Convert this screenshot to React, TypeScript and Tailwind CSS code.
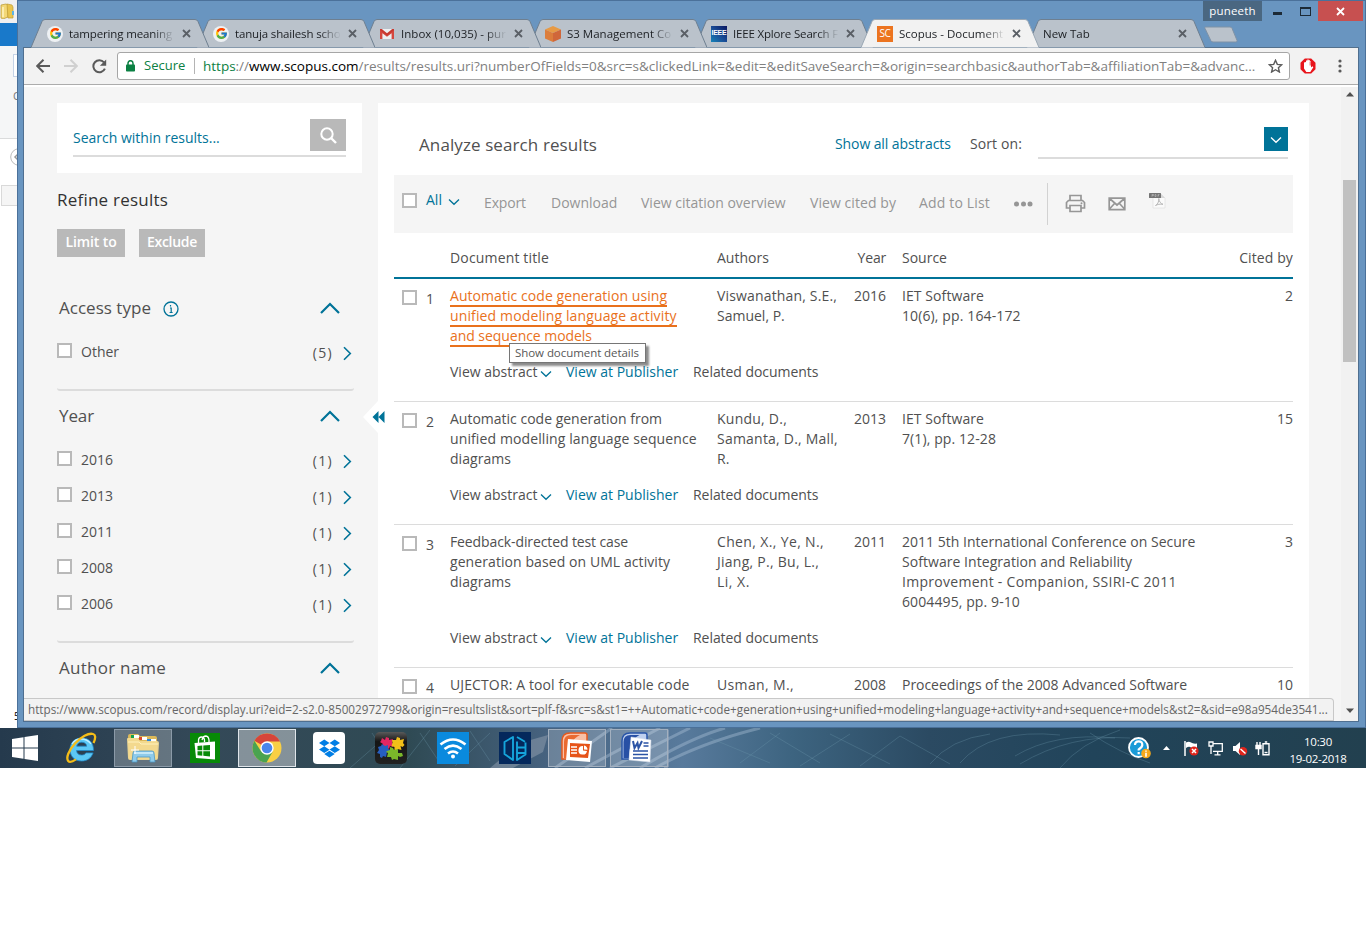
import type { ReactNode } from 'react';
import { FcGoogle } from 'react-icons/fc';
import { FaDropbox } from 'react-icons/fa';

/* ---------- browser tabs ---------- */

function TabShape({ active }: { active?: boolean }) {
  return (
    <svg className="absolute inset-0" width="178" height="29" viewBox="0 0 178 29">
      <path d="M0 28.5 L11 2.5 Q12 .5 14 .5 H164 Q166 .5 167 2.5 L178 28.5 Z" fill={active ? '#f2f2f2' : '#bac2cb'} />
      <path d="M0 28.5 L11 2.5 Q12 .5 14 .5 H164 Q166 .5 167 2.5 L178 28.5" fill="none" stroke={active ? '#9aa7b4' : '#6e7f90'} strokeWidth="1" />
    </svg>
  );
}

const GoogleIcon = () => (
  <span className="flex size-4 items-center justify-center rounded-full bg-[#eef1f4]"><FcGoogle size={13} /></span>
);
const GmailIcon = () => (
  <svg width="16" height="16" viewBox="0 0 16 16">
    <path d="M2 3h12v10H2z" fill="#eceff1" />
    <path d="M1 13V3.400L8 9l7-5.600V13h-2.400V7.200L8 10.800 3.400 7.200V13z" fill="#d5483f" />
    <path d="M1 4.300V3h1.800L8 7.200 13.200 3H15v1.300L8 9.700z" fill="#c8382f" />
  </svg>
);
const CubeIcon = () => (
  <svg width="16" height="16" viewBox="0 0 16 16">
    <path d="M8 0l8 3.500-8 3.500-8-3.500z" fill="#e79a45" />
    <path d="M0 3.500L8 7v9l-8-3.500z" fill="#dc7d3c" />
    <path d="M16 3.500L8 7v9l8-3.500z" fill="#d0673a" />
  </svg>
);
const IeeeIcon = () => (
  <span className="flex size-4 items-center justify-center bg-linear-to-tr from-[#1683b8] via-[#1a4a94] to-[#0b1560] font-['Liberation_Sans'] text-[7px] font-bold tracking-[-0.3px] text-white">IEEE</span>
);
const ScIcon = () => (
  <span className="flex size-4 items-center justify-center bg-[#ec7420] text-[10px] tracking-[-0.3px] text-white">SC</span>
);

const Cross = ({ c = '#5a5f66' }: { c?: string }) => (
  <svg width="9" height="9" viewBox="0 0 9 9"><path d="M1 1l7 7M8 1l-7 7" stroke={c} strokeWidth="1.800" /></svg>
);

type TabData = { icon?: ReactNode; text: string; track: string; active?: boolean };
const tabs: TabData[] = [
  { icon: <GoogleIcon />, text: 'tampering meaning', track: 'tracking-[-0.13px]' },
  { icon: <GoogleIcon />, text: 'tanuja shailesh scho', track: 'tracking-[-0.15px]' },
  { icon: <GmailIcon />, text: 'Inbox (10,035) - pur', track: 'tracking-[0.03px]' },
  { icon: <CubeIcon />, text: 'S3 Management Co', track: 'tracking-[0px]' },
  { icon: <IeeeIcon />, text: 'IEEE Xplore Search F', track: 'tracking-[-0.17px]' },
  { icon: <ScIcon />, text: 'Scopus - Document', track: 'tracking-[0px]', active: true },
  { text: 'New Tab', track: 'tracking-[0px]' },
];
const order = ['z-[7]', 'z-[6]', 'z-[5]', 'z-[4]', 'z-[3]', 'z-[9]', 'z-[1]'];

function TabStrip() {
  return (
    <div className="flex h-[47px] pt-[19px] pl-[13px]">
      {tabs.map((t, i) => (
        <div key={t.text} className={`relative -mr-3 h-[29px] w-[178px] shrink-0 ${order[i]}`}>
          <TabShape active={t.active} />
          <div className="relative flex h-[29px] items-center pl-4">
            {t.icon}
            <span className={`${t.icon ? 'ml-[6px] w-[108px]' : 'w-[130px]'} overflow-hidden text-[11.5px] leading-4 whitespace-nowrap text-[#1c1f23] [mask-image:linear-gradient(to_right,#000_78%,transparent_98%)] ${t.track}`}>{t.text}</span>
            <span className="ml-[5px]"><Cross /></span>
          </div>
        </div>
      ))}
      <svg className="mt-[7px] ml-[10px]" width="36" height="17" viewBox="0 0 36 17">
        <path d="M2.500 1h24.500q1.500 0 2 1.300l5 12q.5 1.700-1 1.700H10q-1.600 0-2.200-1.400L2 2.400Q1.500 1 2.500 1z" fill="#bac2cb" stroke="#7f92a6" />
      </svg>
    </div>
  );
}

function WindowControls() {
  return (
    <div className="absolute top-0 right-[2px] z-20 flex h-5 items-center">
      <span className="flex h-5 w-[59px] items-center justify-center bg-[#4a6781] text-[11.5px] tracking-[0.2px] text-white">puneeth</span>
      <span className="mt-[5px] ml-[11px] h-[3px] w-[9px] bg-[#1c2a36]" />
      <span className="ml-[18px] h-[9px] w-[11px] border border-t-2 border-[#1c2a36]" />
      <span className="ml-[7px] flex h-5 w-[45px] items-center justify-center bg-[#c75050]"><Cross c="#fff" /></span>
    </div>
  );
}

function Toolbar() {
  return (
    <div className="flex h-[38px] items-center border-t border-[#53708c] border-b border-b-[#acacac] bg-[#f2f2f2]">
      <svg className="ml-3 shrink-0" width="14" height="14" viewBox="0 0 14 14"><path d="M14 7H1.500M7.500.7L1.200 7l6.300 6.300" fill="none" stroke="#5a5a5a" strokeWidth="2" /></svg>
      <svg className="ml-[14px] shrink-0" width="14" height="14" viewBox="0 0 14 14"><path d="M0 7h12.500M6.500.7L12.800 7l-6.300 6.300" fill="none" stroke="#d0d0d0" strokeWidth="2" /></svg>
      <svg className="ml-[14px] shrink-0" width="15" height="15" viewBox="0 0 15 15">
        <path d="M12.900 9.600A6 6 0 1 1 12 3.400" fill="none" stroke="#5a5a5a" strokeWidth="2" />
        <path d="M14.200.5v6.300H7.900z" fill="#5a5a5a" />
      </svg>
      <div className="ml-[10px] flex h-7 w-[1173px] shrink-0 items-center rounded-[3px] border border-[#a6a6a6] bg-white whitespace-nowrap">
        <svg className="ml-[8px] shrink-0" width="9" height="12" viewBox="0 0 9 12">
          <path d="M2 5V3.200a2.500 2.500 0 0 1 5 0V5" fill="none" stroke="#0b8043" strokeWidth="1.500" /><rect y="4.500" width="9" height="7" rx=".8" fill="#0b8043" />
        </svg>
        <span className="ml-[9px] w-[42px] text-[13px] text-[#0b8043]">Secure</span>
        <span className="ml-[8px] h-4 w-px bg-[#b4b4b4]" />
        <span className="ml-[8px] w-[1056px] text-[13.5px] tracking-[-0.006px] text-[#808080]"><span className="text-[#0b8043]">https</span>://<span className="text-black">www.scopus.com</span>/results/results.uri?numberOfFields=0&amp;src=s&amp;clickedLink=&amp;edit=&amp;editSaveSearch=&amp;origin=searchbasic&amp;authorTab=&amp;affiliationTab=&amp;advanc...</span>
        <svg className="ml-[9px] shrink-0" width="15" height="14" viewBox="0 0 15 14"><path d="M7.500 1.300l1.800 4.100 4.400.4-3.300 2.900 1 4.300-3.900-2.300L3.600 13l1-4.300L1.300 5.800l4.400-.4z" fill="none" stroke="#5a5a5a" strokeWidth="1.400" /></svg>
      </div>
      <svg className="ml-[10px] shrink-0" width="16" height="16" viewBox="0 0 16 16">
        <path d="M4.800.5h6.400l4.300 4.300v6.400l-4.300 4.300H4.800L.5 11.200V4.800z" fill="#e8141b" />
        <path d="M4 4.500v6L6.300 14h4l3-4.800-.9-.9-1.400 1.200V3.300h-1V2.200H8.600v-.7H7.400V2.600H6V4z" fill="#fff" />
        <path d="M10.200 3.500v4" stroke="#e8141b" strokeWidth=".8" />
      </svg>
      <svg className="ml-[22px] shrink-0" width="4" height="14" viewBox="0 0 4 14"><g fill="#5a5a5a"><circle cx="2" cy="2" r="1.600" /><circle cx="2" cy="7" r="1.600" /><circle cx="2" cy="12" r="1.600" /></g></svg>
    </div>
  );
}

/* ---------- page pieces ---------- */

const Box = ({ className = '' }: { className?: string }) => (
  <span className={`block size-[15px] shrink-0 border-2 border-[#b9b9b9] bg-white ${className}`} />
);
const ChevronUp = () => (
  <svg width="20" height="12" viewBox="0 0 20 12"><path d="M1 11l9-9 9 9" fill="none" stroke="#007398" strokeWidth="2.200" /></svg>
);
const ChevronRight = () => (
  <svg width="9" height="15" viewBox="0 0 9 15"><path d="M1 1.200l6.300 6.300L1 13.800" fill="none" stroke="#007398" strokeWidth="1.600" /></svg>
);
const ChevronDown = ({ c = '#007398' }: { c?: string }) => (
  <svg width="12" height="8" viewBox="0 0 12 8"><path d="M1 1.500l5 4.800 5-4.800" fill="none" stroke={c} strokeWidth="1.300" /></svg>
);

function Facet({ title, track, info, items = [] }: { title: string; track: string; info?: boolean; items?: [string, string][] }) {
  return (
    <section className="w-[297px] rounded-[3px] border-b-2 border-[#dcdcdc] pb-[19px]">
      <div className="mb-px flex h-[50px] items-center pr-[14px] pl-[2px]">
        <h3 className={`text-[17px] whitespace-nowrap ${track}`}>{title}</h3>
        {info && (
          <svg className="mt-[2px] ml-3" width="16" height="16" viewBox="0 0 16 16">
            <circle cx="8" cy="8" r="7" fill="none" stroke="#007398" strokeWidth="1.300" />
            <path d="M7 7h1.200v4.500M6.600 11.500h3M7.500 4v1.500" fill="none" stroke="#007398" strokeWidth="1.200" />
          </svg>
        )}
        <span className="ml-auto"><ChevronUp /></span>
      </div>
      {items.map(([label, count]) => (
        <div key={label} className="flex h-9 items-center pr-[2px]">
          <Box className="mb-[3px]" />
          <span className="mb-[2px] ml-[9px]">{label}</span>
          <span className="mt-[1px] ml-auto tracking-[1.3px]">{count}</span>
          <span className="mt-[3px] ml-[10px]"><ChevronRight /></span>
        </div>
      ))}
    </section>
  );
}

function Sidebar() {
  return (
    <aside className="relative w-[354px] shrink-0 pt-[17px] pl-[33px]">
      <div className="h-[70px] w-[305px] bg-white px-4 pt-4">
        <div className="flex h-[38px] justify-between border-b-2 border-[#dcdcdc]">
          <span className="pt-[8px] text-[#007398]">Search within results...</span>
          <span className="flex h-8 w-9 items-center justify-center bg-[#b9b9b9]">
            <svg width="17" height="17" viewBox="0 0 17 17"><circle cx="7" cy="7" r="5.700" fill="none" stroke="#fff" strokeWidth="2" /><path d="M11 11l5 5" stroke="#fff" strokeWidth="2.400" /></svg>
          </span>
        </div>
      </div>
      <h2 className="mt-[14px] h-[42px] text-[17px] leading-[25px] tracking-[0.22px] text-[#323232]">Refine results</h2>
      <div className="flex gap-[14px] font-semibold text-white">
        <span className="flex h-7 w-[68px] justify-center bg-[#b9b9b9] pt-[2px] tracking-[-0.1px]">Limit to</span>
        <span className="flex h-7 w-[66px] justify-center bg-[#b9b9b9] pt-[2px] tracking-[-0.3px]">Exclude</span>
      </div>
      <div className="mt-[26px]">
        <Facet title="Access type" track="tracking-[0.02px]" info items={[['Other', '(5)']]} />
        <Facet title="Year" track="tracking-[-0.1px]" items={[['2016', '(1)'], ['2013', '(1)'], ['2011', '(1)'], ['2008', '(1)'], ['2006', '(1)']]} />
        <Facet title="Author name" track="tracking-[0.25px]" />
      </div>
      <svg className="absolute top-[315px] right-[-9px]" width="24" height="32" viewBox="0 0 24 32">
        <path d="M15 0v32L0 16z" fill="#fff" />
        <path d="M15.500 10v12L9.500 16zM21.500 10v12l-6-6z" fill="#007398" />
      </svg>
    </aside>
  );
}

type Line = [string, string?];
type Row = { title: Line[]; authors: Line[]; year: string; source: Line[]; cited: string; link?: boolean; folded?: boolean };
const rows: Row[] = [
  {
    link: true,
    title: [['Automatic code generation using', 'tracking-[0.06px]'], ['unified modeling language activity', 'tracking-[0.13px]'], ['and sequence models', 'tracking-[-0.05px]']],
    authors: [['Viswanathan, S.E.,', 'tracking-[0.16px]'], ['Samuel, P.']], year: '2016',
    source: [['IET Software', 'tracking-[0.08px]'], ['10(6), pp. 164-172', 'tracking-[0.12px]']], cited: '2',
  },
  {
    title: [['Automatic code generation from'], ['unified modelling language sequence', 'tracking-[0.11px]'], ['diagrams', 'tracking-[0.05px]']],
    authors: [['Kundu, D.,', 'tracking-[0.24px]'], ['Samanta, D., Mall,', 'tracking-[0.22px]'], ['R.']], year: '2013',
    source: [['IET Software', 'tracking-[0.08px]'], ['7(1), pp. 12-28', 'tracking-[0.1px]']], cited: '15',
  },
  {
    title: [['Feedback-directed test case', 'tracking-[-0.11px]'], ['generation based on UML activity', 'tracking-[0.08px]'], ['diagrams', 'tracking-[0.05px]']],
    authors: [['Chen, X., Ye, N.,', 'tracking-[0.36px]'], ['Jiang, P., Bu, L.,', 'tracking-[0.26px]'], ['Li, X.', 'tracking-[0.5px]']], year: '2011',
    source: [['2011 5th International Conference on Secure', 'tracking-[0.02px]'], ['Software Integration and Reliability', 'tracking-[0.05px]'], ['Improvement - Companion, SSIRI-C 2011', 'tracking-[0.28px]'], ['6004495, pp. 9-10', 'tracking-[0.1px]']], cited: '3',
  },
  {
    folded: true,
    title: [['UJECTOR: A tool for executable code', 'tracking-[0.12px]'], ['generation from UML models']],
    authors: [['Usman, M.,', 'tracking-[0.36px]'], ['Nadeem, A.']], year: '2008',
    source: [['Proceedings of the 2008 Advanced Software', 'tracking-[-0.04px]'], ['Engineering and Its Applications']], cited: '10',
  },
];

const Lines = ({ lines, link }: { lines: Line[]; link?: boolean }) => (
  <>
    {lines.map(([t, k = '']) => (
      <div key={t} className="h-5 leading-5 whitespace-nowrap">
        <span className={link ? `inline-block h-[21px] border-b-2 border-[#e9711c] leading-5 text-[#e9711c] ${k}` : k}>{t}</span>
      </div>
    ))}
  </>
);

const cols = 'grid grid-cols-[56px_267px_124px_45px_1fr_60px]';

function ResultRow({ r, n }: { r: Row; n: number }) {
  return (
    <div className="border-b border-[#dcdcdc] pt-[7px] pb-[19px]">
      <div className={cols}>
        <div className="flex pl-2"><Box className="mt-1" /><span className="mt-[3px] ml-[9px] leading-5">{n}</span></div>
        <div className="relative">
          <Lines lines={r.title} link={r.link} />
          {n === 1 && (
            <div className="absolute top-[57px] left-[59px] z-10 flex h-5 w-[137px] items-center border border-[#767676] bg-white pl-[5px] text-[11.5px] tracking-[-0.06px] whitespace-nowrap text-[#575757] shadow-[3px_3px_2px_rgba(0,0,0,0.45)]">Show document details</div>
          )}
        </div>
        <div><Lines lines={r.authors} /></div>
        <div className="text-right leading-5">{r.year}</div>
        <div className="pl-4"><Lines lines={r.source} /></div>
        <div className="text-right leading-5">{r.cited}</div>
      </div>
      {!r.folded && (
        <div className="mt-4 flex h-5 items-center pl-14 leading-5 whitespace-nowrap">
          <span className="w-[90px]">View abstract</span>
          <span className="mt-1 w-[26px]"><ChevronDown /></span>
          <span className="w-[127px] text-[#007398]">View at Publisher</span>
          <span className="tracking-[-0.05px]">Related documents</span>
        </div>
      )}
    </div>
  );
}

function ActionBar() {
  return (
    <div className="flex h-[58px] items-center bg-[#f5f5f5] pl-2 whitespace-nowrap text-[#969696]">
      <Box className="mb-[7px]" />
      <span className="mb-[10px] ml-[9px] w-[22px] text-[#007398]">All</span>
      <span className="mt-[-4px] w-9"><ChevronDown /></span>
      <span className="mb-[3px] w-[67px] tracking-[-0.14px]">Export</span>
      <span className="mb-[3px] w-[90px]">Download</span>
      <span className="mb-[3px] w-[169px]">View citation overview</span>
      <span className="mb-[3px] w-[109px] tracking-[0.07px]">View cited by</span>
      <span className="mb-[3px] w-[94px] tracking-[0.16px]">Add to List</span>
      <svg width="20" height="6" viewBox="0 0 20 6"><g fill="#969696"><circle cx="3.500" cy="3" r="2.500" /><circle cx="10.500" cy="3" r="2.500" /><circle cx="17" cy="3" r="2.500" /></g></svg>
      <span className="ml-[14px] h-[42px] w-px bg-[#d2d2d2]" />
      <svg className="-mt-px ml-[17px]" width="21" height="19" viewBox="0 0 21 19">
        <g fill="none" stroke="#969696" strokeWidth="1.700"><path d="M5 6V1.500h11V6M5 14H1.500V8.500L3.500 6.500h14l2 2V14H16" /><path d="M5 11.500h11v6H5z" /></g><circle cx="16.500" cy="9.300" r="1" fill="#969696" />
      </svg>
      <svg className="ml-[22px]" width="18" height="14" viewBox="0 0 18 14">
        <path d="M1.200 1.200h15.600v11.400H1.200zM1 1l8 7 8-7M1 12.500l5.500-6M17 12.500l-5.500-6" fill="none" stroke="#969696" strokeWidth="1.700" />
      </svg>
      <svg className="mb-[6px] ml-[23px]" width="17" height="16" viewBox="0 0 17 16">
        <path d="M4 1h8l4 4v10H4z" fill="#fafafa" stroke="#e0e0e0" strokeWidth=".7" />
        <path d="M12 1v4h4z" fill="#d8d8d8" />
        <path d="M6.500 12.500c2-1 3.500-3.500 3.300-7 .2 3 1.800 5 4.200 5.800-3-.4-5.500 0-7.500 1.200z" fill="none" stroke="#b8b8b8" />
        <rect width="12" height="5" rx=".5" fill="#747474" />
        <path d="M3 1.300v2.500M3 1.500h1.500v1H3M6 1.500v2h1v-2zM9 3.700V1.500h1.500M9 2.600h1" fill="none" stroke="#c0c0c0" strokeWidth=".6" />
      </svg>
    </div>
  );
}

function Results() {
  return (
    <main className="mt-[17px] h-[660px] w-[931px] shrink-0 bg-white px-4">
      <div className="flex h-[72px] items-start whitespace-nowrap">
        <h2 className="w-[416px] pt-[29px] pl-[25px] text-[17px] leading-[25px] tracking-[0.1px]">Analyze search results</h2>
        <span className="w-[135px] pt-[31px] pl-[25px] leading-5 tracking-[-0.1px] text-[#007398]">Show all abstracts</span>
        <span className="w-[93px] pt-[31px] pl-[25px] leading-5 tracking-[0.1px]">Sort on:</span>
        <div className="mt-6 flex h-[32px] w-[250px] justify-end border-b-2 border-[#dcdcdc]">
          <span className="flex size-6 items-center justify-center bg-[#007398] pt-[2px]"><ChevronDown c="#fff" /></span>
        </div>
      </div>
      <ActionBar />
      <div className={`${cols} h-[46px] border-b-2 border-[#007398] pt-[15px] leading-5 whitespace-nowrap`}>
        <span />
        <span className="tracking-[0.16px]">Document title</span>
        <span>Authors</span>
        <span className="text-right tracking-[-0.2px]">Year</span>
        <span className="pl-4">Source</span>
        <span className="text-right tracking-[0.1px]">Cited by</span>
      </div>
      {rows.map((r, i) => <ResultRow key={r.title[0][0]} r={r} n={i + 1} />)}
    </main>
  );
}

function Scrollbar() {
  return (
    <div className="ml-auto flex w-[17px] shrink-0 flex-col items-center bg-[#f1f1f1]">
      <svg className="mt-[5px] shrink-0" width="8" height="5" viewBox="0 0 8 5"><path d="M4 0l4 4.500H0z" fill="#505050" /></svg>
      <span className="mt-[83px] h-[182px] w-[13px] shrink-0 bg-[#c1c1c1]" />
      <svg className="mt-auto mb-[8px] shrink-0" width="8" height="5" viewBox="0 0 8 5"><path d="M4 5L0 .5h8z" fill="#505050" /></svg>
    </div>
  );
}

function Browser() {
  return (
    <div className="relative flex h-[728px] w-[1349px] shrink-0 flex-col border border-[#4b719a] bg-[#6995c0]">
      <div className="-mt-px"><TabStrip /></div>
      <WindowControls />
      <div className="relative ml-[5px] flex h-[675px] w-[1336px] flex-col overflow-hidden border border-t-0 border-[#4f6f90] bg-[#f5f5f5]">
        <Toolbar />
        <div className="relative flex min-h-0 flex-1 overflow-hidden border-t-2 border-white text-[14px] text-[#505050]">
          <div className="-mt-px flex">
            <Sidebar />
            <Results />
          </div>
          <Scrollbar />
        </div>
        <div className="absolute bottom-0 left-0 z-20 flex h-[23px] w-[1310px] items-center overflow-hidden rounded-tr-[4px] border border-l-0 border-[#c8c8c8] bg-[#f2f2f2] pt-px pl-[4px] text-[11.710px] whitespace-nowrap text-[#666]">https://www.scopus.com/record/display.uri?eid=2-s2.0-85002972799&amp;origin=resultslist&amp;sort=plf-f&amp;src=s&amp;st1=++Automatic+code+generation+using+unified+modeling+language+activity+and+sequence+models&amp;st2=&amp;sid=e98a954de3541...</div>
      </div>
    </div>
  );
}

function BehindWindow() {
  return (
    <div className="flex w-[17px] shrink-0 flex-col overflow-hidden bg-white text-[11px] text-[#777]">
      <div className="h-[23px] bg-[#f0f0f0] pt-[3px]">
        <svg width="15" height="16" viewBox="0 0 15 16"><path d="M1 2l5-1 2 1v12l-5 2-2-1z" fill="#f3d877" stroke="#b8962e" strokeWidth=".7" /><path d="M7 1l5 1 1 2v11H8z" fill="#e9c54e" stroke="#c09c35" strokeWidth=".7" /><path d="M3 4v10" stroke="#fff5c0" strokeWidth="1.500" /><path d="M12 8h2v4h-2z" fill="#5db4e6" /></svg>
      </div>
      <div className="h-[23px] bg-[#1979ca]" />
      <div className="h-[93px] border-b border-[#dadbdc] bg-[#f5f6f7] pt-2 pl-[13px]">
        <div className="h-[23px] w-5 border border-[#c5d3e6] bg-white" />
        <div className="mt-[11px]">O</div>
      </div>
      <svg className="mt-[9px] ml-[10px] shrink-0" width="18" height="18" viewBox="0 0 18 18"><circle cx="9" cy="9" r="8.300" fill="#fff" stroke="#bbb" /><path d="M9 5L5 9l4 4" fill="none" stroke="#999" strokeWidth="1.500" /></svg>
      <div className="mt-[19px] ml-px h-[21px] w-5 shrink-0 border border-[#d9d9d9] bg-[#f5f5f5]" />
      <div className="mt-auto mb-[4px] pl-[14px] text-[10px] leading-4 text-black">5</div>
    </div>
  );
}

/* ---------- taskbar ---------- */

const WindowsLogo = () => (
  <svg width="26" height="26" viewBox="0 0 26 26" fill="#fff"><path d="M0 4l11.500-1.700v10.200H0zM12.500 2.100L26 0v12.500H12.500zM0 13.500h11.500v10.200L0 22zM12.500 13.500H26V26l-13.500-2.100z" /></svg>
);
const Explorer = () => (
  <svg width="32" height="30" viewBox="0 0 32 30">
    <path d="M1 3q0-2 2-2h8l2 2h15q2 0 2 2v21H2z" fill="#dcb95a" />
    <path d="M4 2h3v3H4z" fill="#16a34a" /><path d="M12 4h3v3h-3z" fill="#d9482b" /><path d="M20 6h4v3h-4z" fill="#2b86d9" />
    <path d="M7 2h5v3H7zM15 4h5v3h-5zM24 6h5v3h-5z" fill="#fff" />
    <path d="M0 6q0-1 1-1h10l2 3h17q2 0 2 2l-1 15q0 2-2 2H3q-2 0-2-2z" fill="#f4dc92" opacity=".93" />
    <path d="M1 9h11l2 2h17" fill="none" stroke="#fff2bd" />
    <path d="M5 29l1-9q0-2 2-2h17q2 0 2 2l1 9h-5v-5H10v5z" fill="#8fcbea" stroke="#4b98c4" strokeWidth=".8" />
    <path d="M7 20h19" stroke="#d4f0fb" strokeWidth="1.500" /><path d="M8 13v8M4 17h8" stroke="#fff" />
  </svg>
);
const InternetExplorer = () => (
  <svg width="32" height="32" viewBox="0 0 32 32">
    <path d="M28.500 18.500H11.500c.3 3 2.200 4.600 5 4.600 2 0 3.500-.7 4.400-2.200h7.200C26.200 26.200 22 29 16.500 29 9.500 29 5 24.200 5 17.500S9.800 6 16.700 6c7.500 0 12 4.800 11.800 12.500zm-6.800-4.300c-.2-2.500-2.200-4-5-4-2.700 0-4.600 1.500-5 4z" fill="#5cc8f5" stroke="#2189c9" strokeWidth=".8" />
    <path d="M7 12c2-3.500 5-5 9-5 5 0 8 2 10 5" fill="none" stroke="#c1efff" strokeWidth="1.300" />
    <path d="M28.500 11c2.500-5.500 2-8.300-.5-9-4.500-1.300-12 3-18 9.500C3.500 18.500.800 26 3.200 29c1.300 1.500 4.400.7 7.800-1.600" fill="none" stroke="#f5bd18" strokeWidth="2.300" />
  </svg>
);
const Store = () => (
  <svg width="30" height="30" viewBox="0 0 30 30">
    <path d="M0 0h30v30H0z" fill="#078a07" />
    <path d="M4.500 10L25 8.500V26.500L6 25z" fill="#fff" />
    <path d="M8.500 10V7q.3-3 3-3 2.500 0 3 3v2M12 7q1-4 4-4 2.500.3 3 4v2" fill="none" stroke="#fff" strokeWidth="1.300" />
    <path d="M7.500 13l4.800-.4v4.600H7.500zM13.300 12.500l6.700-.6v5.300h-6.700zM7.500 18.200h4.800v4.500l-4.800-.4zM13.300 18.200H20v5.200l-6.700-.6z" fill="#078a07" />
  </svg>
);
const Chrome = () => (
  <svg width="30" height="30" viewBox="0 0 30 30">
    <circle cx="15" cy="15" r="14.500" fill="#f9cf44" />
    <path d="M15 15L2.400 7.800A14.500 14.500 0 0 1 27.600 7.800L28 8.500H15z" fill="#d6453a" />
    <path d="M2.400 7.800A14.500 14.500 0 0 0 14.500 29.500L20.800 18.500 15 15 8.500 17.500z" fill="#4aa350" />
    <circle cx="15" cy="15" r="6.700" fill="#fff" /><circle cx="15" cy="15" r="5.300" fill="#4a86ec" />
  </svg>
);
const Puzzle = () => (
  <svg width="32" height="32" viewBox="0 0 32 32">
    <defs><linearGradient id="gloss" x1="0" y1="0" x2="0" y2="1"><stop offset="0" stopColor="#5a5a5a" /><stop offset=".3" stopColor="#151515" /><stop offset="1" stopColor="#222" /></linearGradient></defs>
    <rect width="32" height="32" rx="5" fill="url(#gloss)" />
    <path d="M7 6l3 2 1-3 3 1v2l4-1-1 4 2 1-1 3-3-1-1 3-3-2-3 1v-4L5 10l1-1z" fill="#e32662" />
    <path d="M17 8l4 0 1-3 3 1 0 2 4-1-1 4 1.500 2-2 2-2-1 1 4-4-1-1 2-2-1v-3l-3-1 1-3z" fill="#f1bf18" />
    <path d="M3 15l3-1 1-2 3 2 3-1v4l3 1-1 3-3-1-1 5-3-1-1 2-2-1v-3l-3-1 2-3z" fill="#265ec0" />
    <path d="M12 19l3-1 0-3 3 1 1 2 4-1 0 4 4 0 1 3-3 1-2-1 0 4-4-1-2 1-1-3-4 0 1-4-2-1z" fill="#7ab82a" />
  </svg>
);
const Wifi = () => (
  <svg width="32" height="32" viewBox="0 0 32 32">
    <path d="M0 0h32v32H0z" fill="#0a8ade" />
    <g fill="none" stroke="#fff" strokeWidth="2.600"><path d="M3.500 12.500Q16 2.500 28.500 12.500M7.500 17q8.500-6.800 17 0M11 21.500q5-4 10 0" /></g>
    <circle cx="16" cy="24.500" r="2" fill="#fff" />
  </svg>
);
const HexE = () => (
  <svg width="32" height="32" viewBox="0 0 32 32">
    <path d="M0 0h32v32H0z" fill="#04285c" />
    <path d="M14 5L5.500 10v12l8.500 6zM18 5l8 4.700M18 9.500V28l8.500-5.500V10.500M18 15.500h8M18 21h8" fill="none" stroke="#15a5dc" strokeWidth="1.900" strokeLinejoin="round" />
  </svg>
);
const PowerPoint = () => (
  <svg width="32" height="32" viewBox="0 0 32 32">
    <path d="M1 27V9q0-8 8-8h15q2 0 2 2v24z" fill="#f9c1a8" stroke="#e65a1e" strokeWidth="1.500" />
    <path d="M3 26V10q0-7 7-7h9Q8 8 7 26z" fill="#ea6a31" />
    <path d="M7 7l24 2-2 21-24-2z" fill="#fff" />
    <path d="M9 11l20 1-2 14-18-1z" fill="#e65318" />
    <path d="M10 15h6M10 18h6M10 21h6" stroke="#fff" strokeWidth="1.500" />
    <path d="M22 14a4.300 4.300 0 1 0 4 5l-4-.5z" fill="#fff" /><path d="M23 13.500v4l3.500.3q0-3.600-3.500-4.300z" fill="#fff" />
  </svg>
);
const Word = () => (
  <svg width="32" height="32" viewBox="0 0 32 32">
    <path d="M1 27V9q0-8 8-8h15q2 0 2 2v24z" fill="#bfd0ee" stroke="#2a56a8" strokeWidth="1.500" />
    <path d="M2.500 26V10q0-7 7-7h9Q8 8 8 26z" fill="#2850a5" />
    <path d="M10 5l20 3-1 22-21-2z" fill="#fff" stroke="#d5dcea" strokeWidth=".5" />
    <path d="M12 9l1.500 7 3-5 1 5L21 9" fill="none" stroke="#2b53a5" strokeWidth="2" />
    <path d="M22.500 11h5M22.500 14h5M12 19h15M12 22.500h15M12 26h15" stroke="#2b53a5" strokeWidth="1.600" />
  </svg>
);

const slots: { icon: ReactNode; frame: string }[] = [
  { icon: <InternetExplorer />, frame: '' },
  { icon: <Explorer />, frame: 'border border-[#8b9aa8] bg-white/25' },
  { icon: <Store />, frame: '' },
  { icon: <Chrome />, frame: 'border border-[#dfe5ea] bg-white/40' },
  { icon: <span className="flex size-8 items-center justify-center rounded-[4px] bg-white"><FaDropbox size={21} color="#007ee5" /></span>, frame: '' },
  { icon: <Puzzle />, frame: '' },
  { icon: <Wifi />, frame: '' },
  { icon: <HexE />, frame: '' },
  { icon: <PowerPoint />, frame: 'border border-[#a3b0bf] bg-white/20' },
  { icon: <Word />, frame: 'border border-[#a3b0bf] bg-white/20 pr-1' },
];

function Wallpaper() {
  return (
    <svg className="absolute inset-0" width="1366" height="40" viewBox="0 0 1366 40" preserveAspectRatio="none">
      <defs>
        <linearGradient id="sky" x1="0" y1="0" x2="1" y2="0">
          <stop offset="0" stopColor="#253a4d" /><stop offset=".15" stopColor="#344958" /><stop offset=".3" stopColor="#2f4a54" /><stop offset=".4" stopColor="#46627f" /><stop offset=".5" stopColor="#587a9c" /><stop offset=".58" stopColor="#3d6480" /><stop offset=".68" stopColor="#2b4a62" /><stop offset=".8" stopColor="#21445a" /><stop offset="1" stopColor="#22404f" />
        </linearGradient>
      </defs>
      <path d="M0 0h1366v40H0z" fill="url(#sky)" />
      <g fill="none" stroke="#b4c7dc" strokeWidth="3" opacity=".38"><path d="M555 40L612 0M585 40L660 0M610 40L690 0M640 40Q690 10 725 0M655 40Q700 15 760 0" /></g>
      <path d="M490 40l30-25 28-8-5 17-30 16z" fill="#8796a8" opacity=".6" />
      <g fill="none" stroke="#6f9ab0" strokeWidth="1" opacity=".3">
        <path d="M350 40l40-35M372 5l20 30M400 40l30-38M420 5l20 30M455 38l35-33M470 3l20 30" />
        <path d="M710 10l60 25M740 35l40-30M770 5l50 30M800 38l50-32M830 6l60 30M860 38l40-30M900 8l50 28M930 36q20-25 60-30M960 35q30-35 100-28M1015 28q40-24 100-18M1020 36q50-30 110-26M1060 40q20-25 60-38M1090 5q30 20 60 30" />
      </g>
      <path d="M668 1.500V39M664 1.500h4M664 39h4" fill="none" stroke="#a3b0bf" />
    </svg>
  );
}

function Taskbar() {
  return (
    <div className="relative h-10 overflow-hidden bg-[#2b465a]">
      <Wallpaper />
      <div className="relative flex h-10 items-center">
        <span className="mr-[12px] ml-3"><WindowsLogo /></span>
        {slots.map((s, i) => (
          <span key={i} className="flex h-10 w-[62px] shrink-0 items-center justify-center"><span className={`flex h-[38px] w-[58px] items-center justify-center ${s.frame}`}>{s.icon}</span></span>
        ))}
        <svg className="ml-[458px]" width="23" height="22" viewBox="0 0 23 22">
          <circle cx="10.500" cy="10.500" r="9.500" fill="#1a9bd7" stroke="#fff" strokeWidth="1.800" />
          <path d="M7 8q0-3.700 3.700-3.700T14.300 8q0 2-3.600 4.500v1M10.700 15v2.200" fill="none" stroke="#fff" strokeWidth="2.200" />
          <circle cx="18" cy="16.500" r="4.800" fill="#f5a81c" /><path d="M18 13.500v1.200M18 15.700v4" stroke="#fff" strokeWidth="1.600" />
        </svg>
        <svg className="ml-[12px]" width="7" height="4" viewBox="0 0 7 4"><path d="M3.500 0L7 4H0z" fill="#fff" /></svg>
        <svg className="ml-[14px]" width="15" height="15" viewBox="0 0 15 15">
          <path d="M1 0v15" stroke="#fff" strokeWidth="1.500" /><path d="M2 1.500q3 -1.500 5 0t6 1V7q-4 1-6-.5T2 7z" fill="#fff" /><circle cx="10" cy="10" r="4.600" fill="#e0251c" /><path d="M8 8l4 4M12 8l-4 4" stroke="#fff" strokeWidth="1.500" />
        </svg>
        <svg className="ml-[9px]" width="15" height="15" viewBox="0 0 15 15" fill="none" stroke="#fff" strokeWidth="1.300"><path d="M5 2.700h9.300v7.600H5M1 1h4v4H1zM3 5v8M9.700 10.500v3M6.500 13.800h6" /></svg>
        <svg className="ml-[9px]" width="16" height="15" viewBox="0 0 16 15"><path d="M1 5h2.500L8 1v13L3.500 10H1z" fill="#fff" /><circle cx="11" cy="10.300" r="4.200" fill="#e0251c" /><path d="M8.500 8l5 4.500" stroke="#fff" strokeWidth="1.500" /></svg>
        <svg className="ml-[7px]" width="15" height="15" viewBox="0 0 15 15" fill="none" stroke="#fff" strokeWidth="1.400"><path d="M8 2.700h6v11H8zM9.800 1h2.400M3.500 8v6M2 1v3M5 1v3" /><path d="M1 4.500h5v3H1z" fill="#fff" /><path d="M9.500 11.500h3" /></svg>
        <div className="mt-[3px] ml-[19px] w-[58px] text-center text-[11.500px] leading-[17px] tracking-[-0.3px] text-white"><div>10:30</div><div>19-02-2018</div></div>
      </div>
    </div>
  );
}

export default function App() {
  return (
    <div className="h-[925px] w-[1366px] overflow-hidden bg-white font-['Open_Sans',sans-serif]">
      <div className="flex h-[728px]">
        <BehindWindow />
        <Browser />
      </div>
      <Taskbar />
    </div>
  );
}
